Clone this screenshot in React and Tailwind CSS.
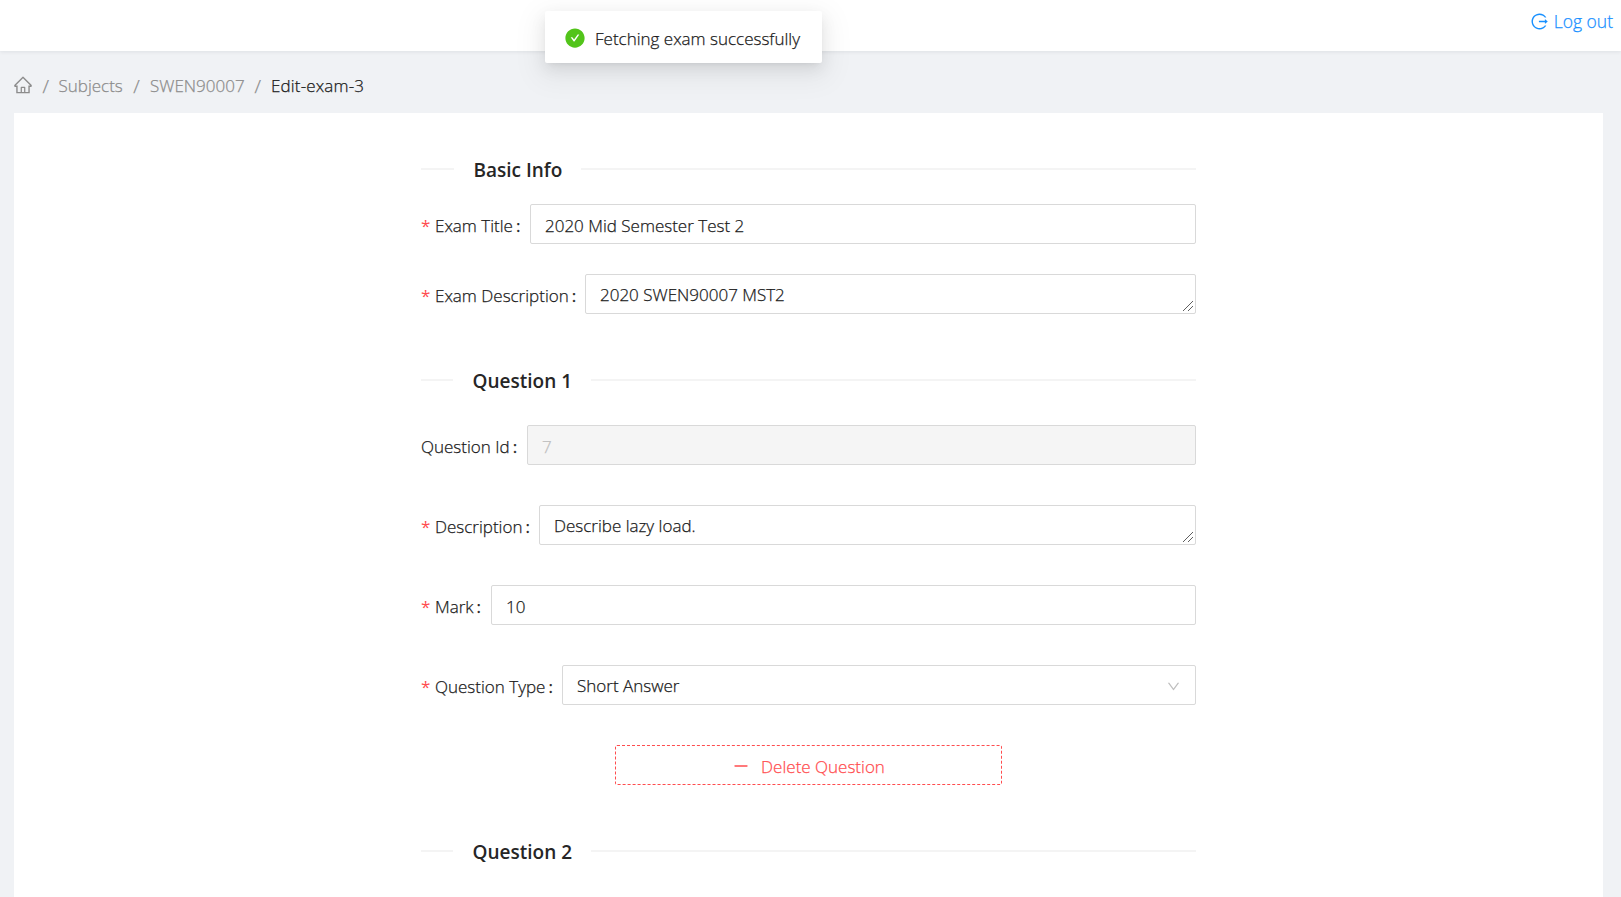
import {
  AiFillCheckCircle,
  AiOutlineDown,
  AiOutlineHome,
  AiOutlineLogout,
  AiOutlineMinus,
} from "react-icons/ai";

function Divider({ title, lead }) {
  return (
    <div className="flex h-[28px] items-center text-[19px] font-semibold text-[#262626] [-webkit-text-stroke:0px]">
      <span className={`h-[2px] shrink-0 bg-[#f4f4f4] ${lead}`} />
      <h2 className="shrink-0 pt-[2px] pr-[18.5px] pl-[19.5px] leading-[26px]">{title}</h2>
      <span className="h-[2px] flex-1 bg-[#f4f4f4]" />
    </div>
  );
}

function Field({ label, labelWidth, required, children }) {
  return (
    <div className="flex h-10">
      <label className={`flex shrink-0 items-center pt-[4px] whitespace-nowrap ${labelWidth}`}>
        {required && (
          <span className="mr-[5px] w-[9px] shrink-0 font-normal text-[#ff4d4f] [-webkit-text-stroke:0px]">*</span>
        )}
        <span>{label}</span>
        <span className="ml-[3px] font-normal">:</span>
      </label>
      {children}
    </div>
  );
}

const box =
  "h-10 min-w-0 flex-1 rounded-[2px] border border-[#d9d9d9] px-[14px] outline-none";

function TextArea({ value }) {
  return (
    <div className="relative flex h-10 min-w-0 flex-1">
      <textarea
        className={`${box} resize-none overflow-hidden bg-white pt-[6px]`}
        rows={1}
        defaultValue={value}
      />
      <svg
        className="pointer-events-none absolute right-[2px] bottom-[2px] size-[12px]"
        viewBox="0 0 12 12"
        fill="none"
        stroke="#4d4d4d"
        strokeWidth="0.9"
      >
        <path d="M1 11 11 1M6 11 11 6" />
      </svg>
    </div>
  );
}

export default function App() {
  return (
    <div className="flex h-[897px] w-full flex-col overflow-hidden bg-[#f0f2f5] font-['Open_Sans',sans-serif] text-[17px] leading-[28px] font-light text-[#1a1a1a] [-webkit-text-stroke:0.25px]">
      <header className="z-10 flex h-[51px] shrink-0 items-start justify-end bg-white pr-[8px] shadow-[0_1px_4px_rgba(0,21,41,0.08)]">
        <a href="#" className="flex items-center pt-[7px] text-[#1890ff]">
          <AiOutlineLogout className="mr-[5px] size-[19px]" strokeWidth="0" />
          <span className="text-[17.5px]">Log out</span>
        </a>
      </header>

      <nav className="flex h-[62px] shrink-0 items-center pt-[7px] pl-[13px] text-[#8c8c8c]">
        <AiOutlineHome className="mb-[2px] size-[20px]" />
        <span className="w-[25.5px] text-center text-[19px]">/</span>
        <a href="#" className="w-[64.5px]">Subjects</a>
        <span className="w-[27px] text-center text-[19px]">/</span>
        <a href="#" className="w-[94.5px]">SWEN90007</a>
        <span className="w-[26.5px] text-center text-[19px]">/</span>
        <span className="tracking-[0.15px] text-[#1a1a1a]">Edit-exam-3</span>
      </nav>

      <main className="mr-[18px] ml-[14px] flex-1 bg-white pt-[42px]">
        <form className="mx-auto flex w-[775px] flex-col">
          <Divider title="Basic Info" lead="w-[33px]" />
          <div className="mt-[21px]">
            <Field label="Exam Title" labelWidth="w-[109px]" required>
              <input className={`${box} bg-white pt-[2px]`} defaultValue="2020 Mid Semester Test 2" />
            </Field>
          </div>
          <div className="mt-[30px]">
            <Field label="Exam Description" labelWidth="w-[164px]" required>
              <TextArea value="2020 SWEN90007 MST2" />
            </Field>
          </div>

          <div className="mt-[52px]">
            <Divider title="Question 1" lead="w-[32px]" />
          </div>
          <div className="mt-[31px] flex flex-col gap-10">
            <Field label="Question Id" labelWidth="w-[106px]">
              <input
                className={`${box} bg-[#f5f5f5] pt-[2px] text-[#bfbfbf]`}
                defaultValue="7"
                disabled
              />
            </Field>
            <Field label="Description" labelWidth="w-[118px]" required>
              <TextArea value="Describe lazy load." />
            </Field>
            <Field label="Mark" labelWidth="w-[70px]" required>
              <input className={`${box} bg-white pt-[2px]`} defaultValue="10" />
            </Field>
            <Field label="Question Type" labelWidth="w-[141px]" required>
              <div className={`${box} flex items-center justify-between bg-white`}>
                <span className="pt-[1px]">Short Answer</span>
                <AiOutlineDown className="mt-[3px] size-[15px] text-[#bfbfbf]" />
              </div>
            </Field>
          </div>

          <button
            type="button"
            className="mx-auto mt-10 flex h-10 w-[387px] items-center justify-center rounded-[2px] border border-dashed border-[#ff4d4f] text-[#ff4d4f]"
          >
            <AiOutlineMinus className="mt-[2px] mr-[11px] size-[18px]" />
            <span className="pt-[3px]">Delete Question</span>
          </button>

          <div className="mt-[52px]">
            <Divider title="Question 2" lead="w-[32px]" />
          </div>
        </form>
      </main>

      <div className="absolute top-[11px] left-[545px] z-20 flex h-[52px] w-[277px] items-center rounded-[2px] bg-white pl-[19px] shadow-[0_3px_6px_-4px_rgba(0,0,0,0.12),0_6px_16px_0_rgba(0,0,0,0.08),0_9px_28px_8px_rgba(0,0,0,0.05)]">
        <AiFillCheckCircle className="mt-[2px] mr-[9px] size-[22px] text-[#52c41a]" />
        <span className="pt-[4px]">Fetching exam successfully</span>
      </div>
    </div>
  );
}
